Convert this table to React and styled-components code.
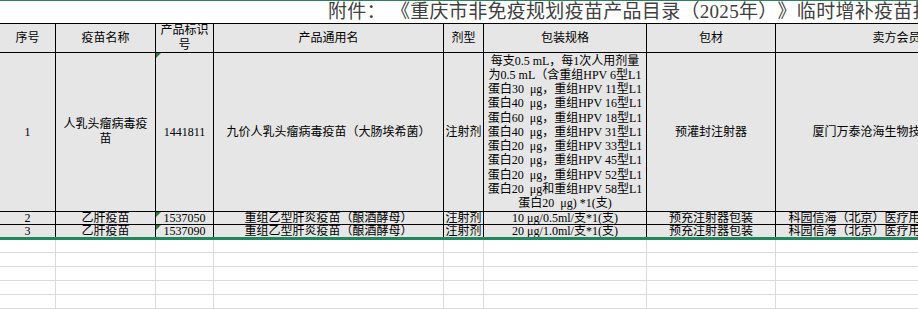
import React from "react";
import styled, { createGlobalStyle } from "styled-components";

const GlobalStyle = createGlobalStyle`
    html, body {
        margin: 0;
        padding: 0;
        background: #ffffff;
        overflow: hidden;
    }
    body {
        font-family: "Liberation Serif", "Noto Sans CJK SC", serif;
        font-size: 12px;
        color: #000;
        text-spacing-trim: space-all;
    }
`;

const COLS = "56px 100px 58px 230px 40px 163px 129px 242px";

const headers = ["序号", "疫苗名称", ["产品标识", "号"], "产品通用名", "剂型", "包装规格", "包材", "卖方会员"];

const specLines = [
    "每支0.5 mL，每1次人用剂量",
    "为0.5 mL（含重组HPV 6型L1",
    "蛋白30  μg，重组HPV 11型L1",
    "蛋白40  μg，重组HPV 16型L1",
    "蛋白60  μg，重组HPV 18型L1",
    "蛋白40  μg，重组HPV 31型L1",
    "蛋白20  μg，重组HPV 33型L1",
    "蛋白20  μg，重组HPV 45型L1",
    "蛋白20  μg，重组HPV 52型L1",
    "蛋白20  μg和重组HPV 58型L1",
    "蛋白20  μg) *1(支)",
];

const hepB = [
    { no: "2", code: "1537050", spec: "10 μg/0.5ml/支*1(支)", height: 13 },
    { no: "3", code: "1537090", spec: "20 μg/1.0ml/支*1(支)", height: 12, last: true },
];

const App = () => {
    return (
        <>
            <GlobalStyle />
            <StSheet>
                <StTitle>附件： 《重庆市非免疫规划疫苗产品目录（2025年）》临时增补疫苗报价表</StTitle>
                <StTable>
                    <StRow $height={29}>
                        {headers.map((h, idx) => (
                            <StCell key={idx} $center>
                                {Array.isArray(h) ? (
                                    <StStack $lh={15}>
                                        {h.map((l) => <div key={l}>{l}</div>)}
                                    </StStack>
                                ) : h}
                            </StCell>
                        ))}
                    </StRow>
                    <StRow $height={159}>
                        <StCell $center>1</StCell>
                        <StCell $center>
                            <StStack $lh={15}>
                                <div>人乳头瘤病毒疫</div>
                                <div>苗</div>
                            </StStack>
                        </StCell>
                        <StCell $center $flag>1441811</StCell>
                        <StCell $center>九价人乳头瘤病毒疫苗（大肠埃希菌）</StCell>
                        <StCell $center>注射剂</StCell>
                        <StCell $center>
                            <StStack $lh={14.2} $pre>
                                {specLines.map((l, idx) => <div key={idx}>{l}</div>)}
                            </StStack>
                        </StCell>
                        <StCell $center>预灌封注射器</StCell>
                        <StCell $center>厦门万泰沧海生物技术有限公司</StCell>
                    </StRow>
                    {hepB.map((r) => (
                        <StRow key={r.no} $height={r.height} $open={r.last}>
                            <StCell>{r.no}</StCell>
                            <StCell>乙肝疫苗</StCell>
                            <StCell $flag>{r.code}</StCell>
                            <StCell>重组乙型肝炎疫苗（酿酒酵母）</StCell>
                            <StCell>注射剂</StCell>
                            <StCell>{r.spec}</StCell>
                            <StCell>预充注射器包装</StCell>
                            <StCell>科园信海（北京）医疗用品贸易有限公司</StCell>
                        </StRow>
                    ))}
                </StTable>
                <StSplit />
                <StBlank>
                    {[13, 14, 14, 14, 14].map((h, idx) => (
                        <StBlankRow key={idx} $height={h}>
                            {Array.from({ length: 8 }).map((_, c) => <span key={c} />)}
                        </StBlankRow>
                    ))}
                </StBlank>
            </StSheet>
        </>
    );
};

export default App;

const StSheet = styled.div`
    width: 918px;
    height: 309px;
    overflow: hidden;
    display: flex;
    flex-direction: column;
`;

const StTitle = styled.div`
    height: 23px;
    box-sizing: border-box;
    border-top: 1px solid #2f8060;
    padding-left: 328px;
    white-space: pre;
    font-size: 19px;
    line-height: 22px;
    color: #404040;
    letter-spacing: 0.3px;
`;

const StTable = styled.div`
    border-top: 1px solid #000;
    background: #e6e6e6;
`;

const StRow = styled.div`
    display: grid;
    grid-template-columns: ${COLS};
    height: ${(p) => p.$height}px;
    & > div {
        border-bottom: ${(p) => (p.$open ? "none" : "1px solid #000")};
    }
`;

const StCell = styled.div`
    position: relative;
    box-sizing: border-box;
    border-right: 1px solid #000;
    overflow: hidden;
    white-space: nowrap;
    text-align: center;
    line-height: 13px;
    display: flex;
    justify-content: center;
    align-items: ${(p) => (p.$center ? "center" : "flex-start")};
    &::before {
        content: "";
        display: ${(p) => (p.$flag ? "block" : "none")};
        position: absolute;
        top: 0;
        left: 0;
        border-top: 5px solid #1f7a35;
        border-right: 5px solid transparent;
    }
`;

const StStack = styled.div`
    line-height: ${(p) => p.$lh}px;
    text-align: center;
    white-space: ${(p) => (p.$pre ? "pre" : "nowrap")};
`;

const StSplit = styled.div`
    height: 3px;
    background: #21875f;
`;

const StBlank = styled.div`
    background: #fff;
`;

const StBlankRow = styled.div`
    display: grid;
    grid-template-columns: ${COLS};
    height: ${(p) => p.$height}px;
    span {
        box-sizing: border-box;
        border-right: 1px solid #dadada;
        border-bottom: 1px solid #dadada;
    }
`;
